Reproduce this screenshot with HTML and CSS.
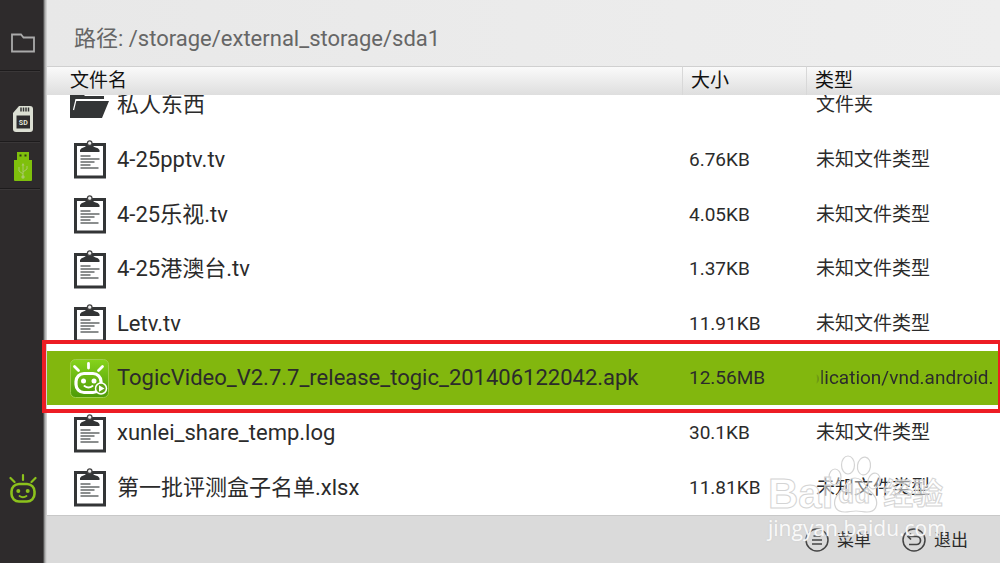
FILE: index.html
```html
<!DOCTYPE html>
<html lang="zh-CN">
<head>
    <meta charset="UTF-8">
    <meta name="viewport" content="width=device-width, initial-scale=1.0">
    <title>文件名</title>
    <link rel="stylesheet" href="styles.css">
</head>
<body>

    <!-- shared icons -->
    <svg class="sprite" width="0" height="0">
        <symbol id="clipboard" viewBox="0 0 39 39">
            <path d="M5.500 4.500h29v32.500h-29z" fill="#fff" stroke="#333536" stroke-width="3"/>
            <path d="M10 12v-2q1-2 4-2.800 2.500-.7 3-4.200h5q.5 3.500 3 4.200 3.500.8 4.500 2.800v2z" fill="#333536"/>
            <circle cx="19.700" cy="3.200" r="2.300" fill="#eee" stroke="#444" stroke-width="1.300"/>
            <path d="M10.500 16h10M10.500 19h19M10.500 22h14M10.500 25h10M10.500 28h18" stroke="#66696a" stroke-width="1.300"/>
        </symbol>
        <symbol id="robot" viewBox="0 0 28 30">
            <g fill="none" stroke="currentColor" stroke-linecap="round">
                <rect x="2.500" y="11" width="23" height="17.500" rx="7.500" stroke-width="2.600"/>
                <path d="M14 2v5M1.500 5l4 4M26.500 5l-4 4" stroke-width="2.200"/>
                <path d="M10.500 23q3.500 2.500 7 0" stroke-width="1.800"/>
            </g>
            <circle cx="9.300" cy="18" r="2" fill="currentColor"/>
            <circle cx="18.700" cy="18" r="2" fill="currentColor"/>
        </symbol>
    </svg>

    <nav class="sidebar">
        <button class="side-item folder" aria-label="文件夹">
            <svg width="24" height="20" viewBox="0 0 24 20"><path d="M1 18.500V1.500h9l2.500 3H23v14z" fill="none" stroke="#aaa" stroke-width="1.800"/></svg>
        </button>
        <button class="side-item sd" aria-label="SD">
            <svg width="22" height="28" viewBox="0 0 22 28">
                <path d="M7 1h11q3 0 3 3v20q0 3-3 3H4q-3 0-3-3V8z" fill="#dcdfd3"/>
                <path d="M9 2.500v4M11.500 2.500v4M14 2.500v4M16.500 2.500v4" stroke="#333" stroke-width="1.500"/>
                <path d="M4.500 10.500h13.500v13h-13.500z" fill="#2e2c2d"/>
                <text x="11.300" y="19.500" class="sd-text">SD</text>
            </svg>
        </button>
        <button class="side-item usb" aria-label="USB">
            <svg width="18" height="29" viewBox="0 0 18 29">
                <path d="M3 0h12v8h3v20q0 1-1 1H1q-1 0-1-1V8h3z" fill="#7fc00c"/>
                <path d="M5.500 2.500h2v2h-2zM10.500 2.500h2v2h-2z" fill="#2e3a10"/>
                <path d="M9 12v14M9 22l-4-3v-4M9 20l4-3v-3" fill="none" stroke="#a9c96a" stroke-width="1"/>
                <path d="M7.500 13.500 9 11l1.500 2.500z" fill="#a9c96a"/>
                <circle cx="9" cy="25" r="1.700" fill="#a9c96a"/>
            </svg>
        </button>
        <button class="side-item togic" aria-label="Togic"><svg width="28" height="30"><use href="#robot"/></svg></button>
    </nav>

    <main class="content">
        <header class="path">路径: /storage/external_storage/sda1</header>

        <div class="file-list">
            <table class="files">
                <thead>
                    <tr><th class="name">文件名</th><th class="size">大小</th><th class="type">类型</th></tr>
                </thead>
                <tbody>
                    <tr>
                        <td class="name"><div class="file">
                            <svg class="icon" viewBox="0 0 39 39"><path d="M0 32V8h13l2 2h19v3H6L3 23l2-8h34l-7 17z" fill="#333536"/><path d="M3.500 24 6 13.500h28" fill="none" stroke="#fff" stroke-width="1.200"/></svg>
                            私人东西</div></td>
                        <td class="size"></td>
                        <td class="type">文件夹</td>
                    </tr>
                    <tr>
                        <td class="name"><div class="file"><svg class="icon"><use href="#clipboard"/></svg>4-25pptv.tv</div></td>
                        <td class="size">6.76KB</td>
                        <td class="type">未知文件类型</td>
                    </tr>
                    <tr>
                        <td class="name"><div class="file"><svg class="icon"><use href="#clipboard"/></svg>4-25乐视.tv</div></td>
                        <td class="size">4.05KB</td>
                        <td class="type">未知文件类型</td>
                    </tr>
                    <tr>
                        <td class="name"><div class="file"><svg class="icon"><use href="#clipboard"/></svg>4-25港澳台.tv</div></td>
                        <td class="size">1.37KB</td>
                        <td class="type">未知文件类型</td>
                    </tr>
                    <tr>
                        <td class="name"><div class="file"><svg class="icon"><use href="#clipboard"/></svg>Letv.tv</div></td>
                        <td class="size">11.91KB</td>
                        <td class="type">未知文件类型</td>
                    </tr>
                    <tr class="selected">
                        <td class="name"><div class="file">
                            <svg class="icon" viewBox="0 0 39 39">
                                <defs><linearGradient id="app" x1="0" y1="0" x2="0" y2="1"><stop offset="0" stop-color="#86d31b"/><stop offset="1" stop-color="#4d9a08"/></linearGradient></defs>
                                <rect x=".5" y=".5" width="38" height="38" rx="5" fill="url(#app)" stroke="#9fce4c"/>
                                <g fill="none" stroke="#fff" stroke-linecap="round">
                                    <rect x="6" y="14.500" width="25" height="19" rx="8" stroke-width="3.200"/>
                                    <path d="M18.500 4.500v4.500M4.500 7.500l4 4M32.500 7.500l-4 4" stroke-width="2.800"/>
                                    <path d="M14.500 27q4 3 8 0" stroke-width="2"/>
                                </g>
                                <circle cx="13.500" cy="22" r="2.500" fill="#fff"/>
                                <circle cx="24" cy="22" r="2.500" fill="#fff"/>
                                <circle cx="31" cy="29.500" r="5.500" fill="#61a516" stroke="#fff" stroke-width="1.500"/>
                                <path d="M29 26.200v6.600l5.500-3.300z" fill="#fff"/>
                            </svg>
                            TogicVideo_V2.7.7_release_togic_201406122042.apk</div></td>
                        <td class="size">12.56MB</td>
                        <td class="type"><div class="marquee">plication/vnd.android.</div></td>
                    </tr>
                    <tr>
                        <td class="name"><div class="file"><svg class="icon"><use href="#clipboard"/></svg>xunlei_share_temp.log</div></td>
                        <td class="size">30.1KB</td>
                        <td class="type">未知文件类型</td>
                    </tr>
                    <tr>
                        <td class="name"><div class="file"><svg class="icon"><use href="#clipboard"/></svg>第一批评测盒子名单.xlsx</div></td>
                        <td class="size">11.81KB</td>
                        <td class="type">未知文件类型</td>
                    </tr>
                </tbody>
            </table>
        </div>

        <footer class="actions">
            <button class="action">
                <svg width="24" height="24" viewBox="0 0 24 24" fill="none" stroke="#444"><circle cx="12" cy="12" r="11" stroke-width="1.500"/><path d="M8.500 8h7M7 12h10M7 16h10" stroke-width="1.700"/></svg>
                菜单
            </button>
            <button class="action">
                <svg width="24" height="24" viewBox="0 0 24 24" fill="none" stroke="#444"><circle cx="12" cy="12" r="11" stroke-width="1.500"/><path d="M9 5.500 6 8.500l3 3M6 8.500h8.500a4 4 0 0 1 0 8H7" stroke-width="1.700"/></svg>
                退出
            </button>
        </footer>
    </main>

    <div class="highlight"></div>

    <div class="watermark">
        <svg class="paw" width="56" height="60" viewBox="0 0 56 60" fill="#fff" fill-opacity=".4" stroke="#d4d4d4" stroke-width="1.200">
            <ellipse cx="7" cy="22" rx="6" ry="8"/>
            <ellipse cx="20" cy="10" rx="6.500" ry="9"/>
            <ellipse cx="36" cy="11" rx="6.500" ry="9" transform="rotate(8 36 11)"/>
            <ellipse cx="46" cy="26" rx="6" ry="8" transform="rotate(15 46 26)"/>
            <path d="M27 23c-7 0-9 8-14 13-10 9-8 21 4 21 4 0 7-1 11-1s7 1 11 1c11 0 13-12 4-20-6-6-8-14-16-14z"/>
        </svg>
        <div class="brand"><span>Bai</span><span class="du">du</span><span class="cn">经验</span></div>
        <div class="site">jingyan.baidu.com</div>
    </div>

</body>
</html>
```
FILE: styles.css
```css
* {
    box-sizing: border-box;
}
body {
    position: relative;
    display: flex;
    height: 100vh;
    margin: 0;
    overflow: hidden;
    font-family: Roboto, "Noto Sans CJK SC", sans-serif;
    color: #2b2b2b;
    background: #fff;
}
button {
    padding: 0;
    border: 0;
    background: none;
    font: inherit;
    color: inherit;
    cursor: pointer;
}
svg {
    display: block;
    flex: none;
}
.sprite {
    position: absolute;
}

/* sidebar */
.sidebar {
    display: flex;
    flex-direction: column;
    flex: none;
    width: 47px;
    padding-right: 3px;
    background: linear-gradient(to right, #2e2b2c 43px, #777 44px, #aaa 45px, #ddd);
}
.side-item {
    display: flex;
    justify-content: center;
    align-items: flex-end;
    width: 40px;
    padding: 0 0 8px 5px;
    border-bottom: 1px solid #1d1b1c;
    box-shadow: 0 1px #3a3738;
}
.folder {
    height: 71px;
    padding-bottom: 17px;
}
.sd {
    height: 71px;
}
.usb {
    height: 47px;
    padding-bottom: 7px;
}
.togic {
    margin-top: auto;
    padding-bottom: 60px;
    border: 0;
    box-shadow: none;
    color: #8cc21c;
}
.sd-text {
    font-size: 7px;
    font-weight: bold;
    text-anchor: middle;
    fill: #e4e6dc;
}

/* main area */
.content {
    display: flex;
    flex-direction: column;
    flex: 1;
    min-width: 0;
}
.path {
    display: flex;
    align-items: center;
    flex: none;
    height: 66px;
    padding: 6px 27px 0;
    font-size: 22px;
    color: #666;
    background: linear-gradient(to right, #e8e8e8, #eee);
}

/* opens scrolled to the last row */
.file-list {
    display: flex;
    flex-direction: column-reverse;
    flex: 1;
    min-height: 0;
    overflow-y: auto;
    scrollbar-width: none;
}
.files {
    flex: none;
    width: 100%;
    height: 466px;
    table-layout: fixed;
    border-collapse: separate;
    border-spacing: 0;
    font-size: 19px;
}
.files th {
    position: sticky;
    top: 0;
    z-index: 1;
    height: 29px;
    padding: 0 8px;
    border-top: 1px solid #d0d0d0;
    text-align: left;
    font-weight: normal;
    line-height: 24px;
    color: #111;
    background: linear-gradient(#fafafa, #dedede);
}
.files th + th {
    border-left: 1px solid #d8d8d8;
}
.files td {
    height: 54px;
    padding: 0 0 0 7px;
    line-height: 24px;
    white-space: nowrap;
}
.files .name {
    padding-left: 23px;
}
.files th.size {
    width: 124px;
}
.files th.type {
    width: 194px;
}
.files td.type {
    padding-left: 10px;
}
.file {
    display: flex;
    align-items: center;
    gap: 8px;
    font-size: 22px;
}
.icon {
    width: 39px;
    height: 39px;
}
.selected {
    background: #82b70e;
}
.marquee {
    overflow: hidden;
    text-indent: -7px;
    -webkit-mask-image: linear-gradient(to right, transparent, #000 8px);
    mask-image: linear-gradient(to right, transparent, #000 8px);
}

/* bottom bar */
.actions {
    display: flex;
    justify-content: flex-end;
    align-items: center;
    flex: none;
    gap: 31px;
    height: 48px;
    padding-right: 32px;
    border-top: 1px solid #c8c8c8;
    background: #dadada;
}
.action {
    display: flex;
    align-items: center;
    gap: 8px;
    font-size: 17px;
    line-height: 24px;
}

/* frame around the selected file */
.highlight {
    position: absolute;
    left: 42px;
    right: 0;
    bottom: 150px;
    height: 73px;
    border: 4px solid #ed1c24;
    border-right-width: 2px;
    pointer-events: none;
}
.highlight::before,
.highlight::after {
    content: "";
    position: absolute;
    left: 1px;
    right: 0;
    height: 6px;
    background: #fff;
}
.highlight::before {
    top: 0;
}
.highlight::after {
    bottom: 0;
    height: 4px;
}

/* watermark */
.watermark {
    position: absolute;
    right: 54px;
    bottom: 22px;
    width: 178px;
    pointer-events: none;
}
.paw {
    position: absolute;
    left: 60px;
    bottom: 26px;
}
.brand {
    position: relative;
    display: flex;
    align-items: center;
    height: 42px;
    font-family: "Liberation Sans", "Noto Sans CJK SC", sans-serif;
    font-size: 42px;
    line-height: 42px;
    font-weight: bold;
    color: rgba(255, 255, 255, 0.5);
    -webkit-text-stroke: 1px #d4d4d4;
}
.du {
    padding: 0 13px 0 5px;
    font-size: 26px;
}
.cn {
    font-size: 30px;
}
.site {
    position: relative;
    font-family: "Open Sans", sans-serif;
    font-size: 21px;
    line-height: 26px;
    color: rgba(255, 255, 255, 0.9);
    text-shadow: 0 0 2px #ccc;
}
```
